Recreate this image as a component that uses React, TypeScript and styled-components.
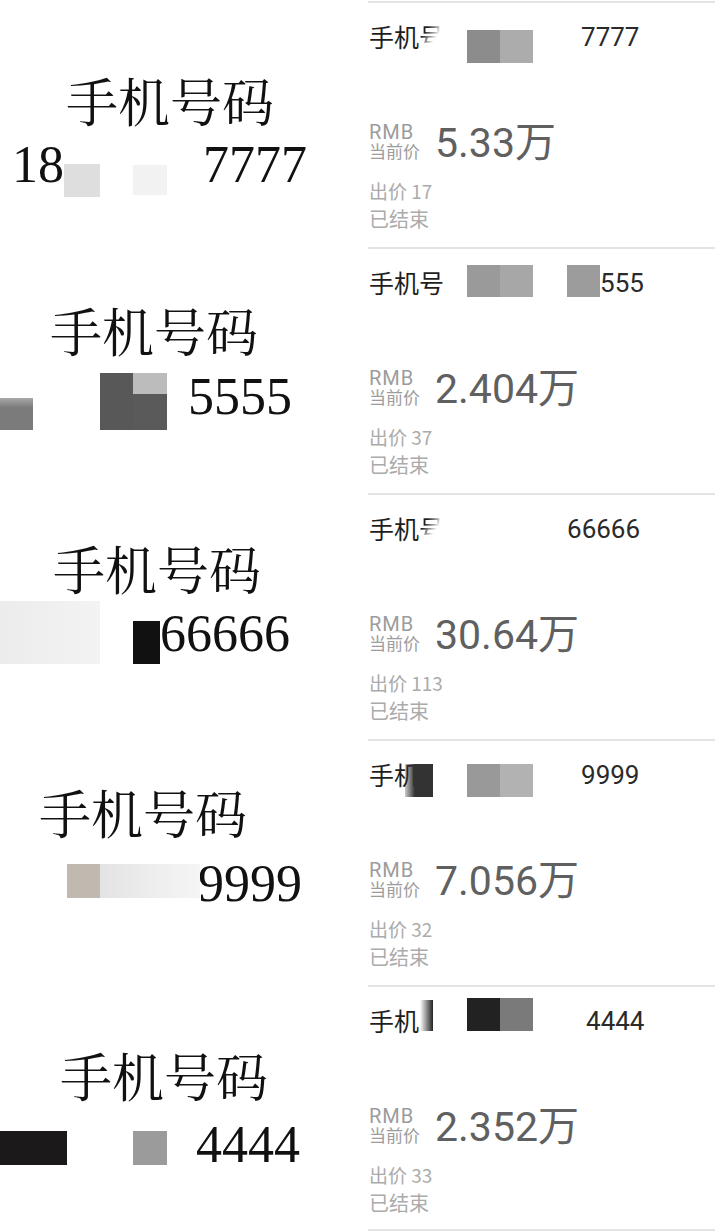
import React from "react";
import styled, { createGlobalStyle } from "styled-components";

const GlobalStyle = createGlobalStyle`
  html, body { margin: 0; padding: 0; background: #ffffff; }
  body { width: 720px; overflow: hidden; }
  * { box-sizing: border-box; }
`;

const Page = styled.main`
  width: 720px;
  padding-top: 1px;
  display: flex;
  flex-direction: column;
`;

const Row = styled.section`
  display: grid;
  grid-template-columns: 360px 360px;
  height: 246px;
`;

const Poster = styled.div<{ $top: number }>`
  display: flex;
  flex-direction: column;
  padding-top: ${(p) => p.$top}px;
  overflow: hidden;
`;

const PosterTitle = styled.div<{ $x: number }>`
  margin-left: ${(p) => p.$x}px;
  font-family: "Noto Serif CJK SC", "Noto Sans CJK SC", serif;
  font-size: 52px;
  line-height: 52px;
  height: 52px;
  color: #111;
  white-space: nowrap;
`;

const NumberLine = styled.div<{ $mt: number }>`
  display: flex;
  align-items: flex-start;
  margin-top: ${(p) => p.$mt}px;
`;

const SerifDigits = styled.span<{ $ml: number; $mt: number }>`
  flex: none;
  margin-left: ${(p) => p.$ml}px;
  margin-top: ${(p) => p.$mt}px;
  font-family: "Liberation Serif", "Times New Roman", serif;
  font-size: 52px;
  line-height: 52px;
  color: #111;
  white-space: nowrap;
`;

const Mosaic = styled.span<{ $w: number; $h: number; $ml: number; $mt: number; $bg: string }>`
  flex: none;
  display: block;
  width: ${(p) => p.$w}px;
  height: ${(p) => p.$h}px;
  margin-left: ${(p) => p.$ml}px;
  margin-top: ${(p) => p.$mt}px;
  background: ${(p) => p.$bg};
  position: relative;
`;

const Card = styled.div<{ $last?: boolean }>`
  margin: 0 5px 0 8px;
  padding: 21px 0 0 1px;
  border-top: 2px solid #e4e4e4;
  ${(p) => (p.$last ? "border-bottom: 2px solid #e4e4e4;" : "")}
  display: flex;
  flex-direction: column;
  font-family: Roboto, "Noto Sans CJK SC", sans-serif;
`;

const TitleLine = styled.div`
  display: flex;
  align-items: flex-start;
  height: 40px;
`;

const CardTitle = styled.span`
  flex: none;
  font-family: "Noto Sans CJK SC", sans-serif;
  font-size: 25px;
  line-height: 25px;
  color: #1e1e1e;
  white-space: nowrap;
`;

const Faded = styled.span`
  -webkit-mask-image: linear-gradient(to bottom right, #000 30%, transparent 62%);
  mask-image: linear-gradient(to bottom right, #000 30%, transparent 62%);
`;

const CardDigits = styled.span<{ $ml: number }>`
  flex: none;
  margin-left: ${(p) => p.$ml}px;
  font-family: Roboto, sans-serif;
  font-size: 26px;
  line-height: 26px;
  color: #2a2a2a;
  white-space: nowrap;
`;

const PriceRow = styled.div`
  display: flex;
  align-items: flex-start;
  margin-top: 59px;
  height: 41px;
`;

const PriceLabel = styled.div`
  display: flex;
  flex-direction: column;
  flex: none;
  width: 51px;
  color: #9c9c9c;
  white-space: nowrap;
`;

const Currency = styled.span`
  font-family: Roboto, sans-serif;
  font-size: 20px;
  line-height: 19px;
  letter-spacing: 1px;
`;

const CurrentTag = styled.span`
  font-family: "Noto Sans CJK SC", sans-serif;
  font-size: 17px;
  line-height: 17px;
`;

const Price = styled.span`
  margin-left: 15px;
  font-family: Roboto, "Noto Sans CJK SC", sans-serif;
  font-size: 41px;
  line-height: 41px;
  color: #606060;
  white-space: nowrap;
`;

const Bids = styled.div`
  margin-top: 17px;
  font-family: "Noto Sans CJK SC", sans-serif;
  font-size: 19px;
  line-height: 19px;
  color: #ababab;
`;

const Status = styled.div`
  margin-top: 9px;
  font-family: "Noto Sans CJK SC", sans-serif;
  font-size: 20px;
  line-height: 20px;
  color: #ababab;
`;

type Piece =
  | { kind: "block"; w: number; h: number; ml?: number; mt?: number; bg: string }
  | { kind: "text"; text: string; ml?: number; mt?: number };

type TitlePart = { text: string; faded?: boolean };

type Listing = {
  posterTop: number;
  posterX: number;
  numberGap: number;
  numberLine: Piece[];
  title: TitlePart[];
  titleLine: Piece[];
  price: string;
  bids: number;
};

const listings: Listing[] = [
  {
    posterTop: 73,
    posterX: 66,
    numberGap: 13,
    numberLine: [
      { kind: "text", text: "18", ml: 12 },
      { kind: "block", w: 36, h: 33, mt: 25, bg: "#dedede" },
      { kind: "block", w: 34, h: 30, ml: 33, mt: 26, bg: "#f2f2f2" },
      { kind: "text", text: "7777", ml: 36 },
    ],
    title: [{ text: "手机" }, { text: "号", faded: true }],
    titleLine: [
      { kind: "block", w: 33, h: 33, ml: 23, mt: 6, bg: "#8c8c8c" },
      { kind: "block", w: 33, h: 33, mt: 6, bg: "#acacac" },
      { kind: "text", text: "7777", ml: 48 },
    ],
    price: "5.33万",
    bids: 17,
  },
  {
    posterTop: 57,
    posterX: 50,
    numberGap: 15,
    numberLine: [
      { kind: "block", w: 33, h: 32, mt: 27, bg: "linear-gradient(#a8a8a8, #7b7b7b 30%)" },
      { kind: "block", w: 33, h: 57, ml: 67, mt: 2, bg: "#585858" },
      { kind: "block", w: 34, h: 57, mt: 2, bg: "linear-gradient(#bcbcbc 0 21px, #5a5a5a 21px)" },
      { kind: "text", text: "5555", ml: 21 },
    ],
    title: [{ text: "手机号" }],
    titleLine: [
      { kind: "block", w: 33, h: 32, ml: 23, mt: -5, bg: "#9a9a9a" },
      { kind: "block", w: 33, h: 32, mt: -5, bg: "#a7a7a7" },
      { kind: "block", w: 33, h: 32, ml: 34, mt: -5, bg: "#9c9c9c" },
      { kind: "text", text: "555", ml: 0 },
    ],
    price: "2.404万",
    bids: 37,
  },
  {
    posterTop: 49,
    posterX: 53,
    numberGap: 7,
    numberLine: [
      { kind: "block", w: 100, h: 63, bg: "linear-gradient(to right, #ececec, #f3f3f3)" },
      { kind: "block", w: 27, h: 43, ml: 33, mt: 20, bg: "#111111" },
      { kind: "text", text: "66666", mt: 7 },
    ],
    title: [{ text: "手机" }, { text: "号", faded: true }],
    titleLine: [{ kind: "text", text: "66666", ml: 123 }],
    price: "30.64万",
    bids: 113,
  },
  {
    posterTop: 47,
    posterX: 39,
    numberGap: 20,
    numberLine: [
      { kind: "block", w: 33, h: 34, ml: 67, mt: 6, bg: "#c1b9b0" },
      { kind: "block", w: 100, h: 34, mt: 6, bg: "linear-gradient(to right, #e3e3e3, #ededed 50%, #f5f5f5)" },
      { kind: "text", text: "9999", ml: -2 },
    ],
    title: [{ text: "手机" }],
    titleLine: [
      { kind: "block", w: 28, h: 33, ml: -14, mt: 2, bg: "linear-gradient(to right, rgba(50,50,50,0.25), #333 35%)" },
      { kind: "block", w: 33, h: 33, ml: 34, mt: 2, bg: "#999999" },
      { kind: "block", w: 33, h: 33, mt: 2, bg: "#b2b2b2" },
      { kind: "text", text: "9999", ml: 48 },
    ],
    price: "7.056万",
    bids: 32,
  },
  {
    posterTop: 64,
    posterX: 60,
    numberGap: 18,
    numberLine: [
      { kind: "block", w: 67, h: 34, mt: 12, bg: "#1b1919" },
      { kind: "block", w: 34, h: 34, ml: 66, mt: 12, bg: "#9b9b9b" },
      { kind: "text", text: "4444", ml: 29 },
    ],
    title: [{ text: "手机" }],
    titleLine: [
      { kind: "block", w: 13, h: 31, ml: 1, mt: -8, bg: "linear-gradient(to right, rgba(30,30,30,0), #222)" },
      { kind: "block", w: 33, h: 33, ml: 34, mt: -10, bg: "#222222" },
      { kind: "block", w: 33, h: 33, mt: -10, bg: "#7a7a7a" },
      { kind: "text", text: "4444", ml: 53 },
    ],
    price: "2.352万",
    bids: 33,
  },
];

function renderPoster(pieces: Piece[]) {
  return pieces.map((p, i) =>
    p.kind === "block" ? (
      <Mosaic key={i} $w={p.w} $h={p.h} $ml={p.ml ?? 0} $mt={p.mt ?? 0} $bg={p.bg} />
    ) : (
      <SerifDigits key={i} $ml={p.ml ?? 0} $mt={p.mt ?? 0}>
        {p.text}
      </SerifDigits>
    )
  );
}

function renderTitleLine(pieces: Piece[]) {
  return pieces.map((p, i) =>
    p.kind === "block" ? (
      <Mosaic key={i} $w={p.w} $h={p.h} $ml={p.ml ?? 0} $mt={p.mt ?? 0} $bg={p.bg} />
    ) : (
      <CardDigits key={i} $ml={p.ml ?? 0}>
        {p.text}
      </CardDigits>
    )
  );
}

export default function App() {
  return (
    <>
      <GlobalStyle />
      <Page>
        {listings.map((l, idx) => (
          <Row key={idx}>
            <Poster $top={l.posterTop}>
              <PosterTitle $x={l.posterX}>手机号码</PosterTitle>
              <NumberLine $mt={l.numberGap}>{renderPoster(l.numberLine)}</NumberLine>
            </Poster>
            <Card $last={idx === listings.length - 1}>
              <TitleLine>
                <CardTitle>
                  {l.title.map((t, i) => (t.faded ? <Faded key={i}>{t.text}</Faded> : <span key={i}>{t.text}</span>))}
                </CardTitle>
                {renderTitleLine(l.titleLine)}
              </TitleLine>
              <PriceRow>
                <PriceLabel>
                  <Currency>RMB</Currency>
                  <CurrentTag>当前价</CurrentTag>
                </PriceLabel>
                <Price>{l.price}</Price>
              </PriceRow>
              <Bids>出价 {l.bids}</Bids>
              <Status>已结束</Status>
            </Card>
          </Row>
        ))}
      </Page>
    </>
  );
}
